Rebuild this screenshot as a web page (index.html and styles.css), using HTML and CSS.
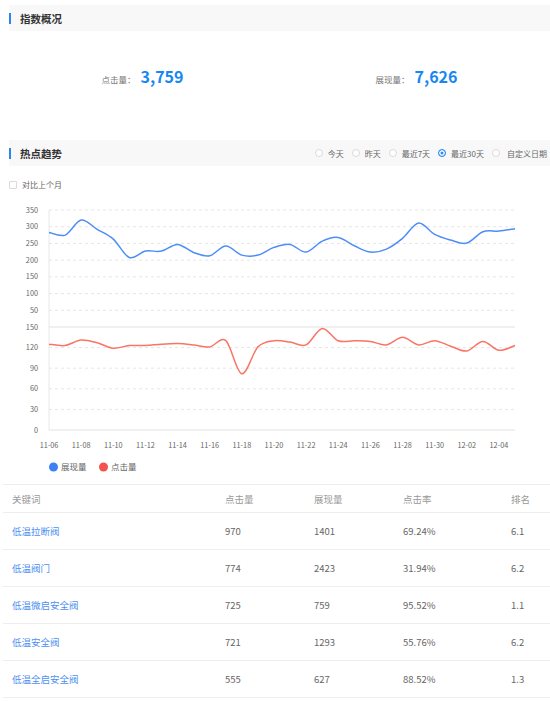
FILE: index.html
```html
<!DOCTYPE html>
<html lang="zh-CN">

<head>
    <meta charset="UTF-8">
    <meta name="viewport" content="width=device-width, initial-scale=1">
    <title>关键词指数</title>
    <link rel="stylesheet" href="styles.css">
</head>

<body>
    <div class="section-head first-head">
        <h3>指数概况</h3>
    </div>

    <div class="stats">
        <div class="stat"><span class="stat-label">点击量：</span><span class="stat-value">3,759</span></div>
        <div class="stat"><span class="stat-label">展现量：</span><span class="stat-value">7,626</span></div>
    </div>

    <div class="section-head">
        <h3>热点趋势</h3>
        <ul class="range">
            <li><span class="radio"></span>今天</li>
            <li><span class="radio"></span>昨天</li>
            <li><span class="radio"></span>最近7天</li>
            <li><span class="radio checked"></span>最近30天</li>
            <li class="custom"><span class="radio"></span>自定义日期</li>
        </ul>
    </div>

    <label class="compare"><span class="checkbox"></span>对比上个月</label>

    <svg id="trend" class="trend" viewBox="0 195 550 285" width="550" height="285"></svg>

    <table class="keywords">
        <colgroup>
            <col style="width: 213px">
            <col style="width: 89px">
            <col style="width: 89px">
            <col style="width: 108px">
            <col>
        </colgroup>
        <thead>
            <tr>
                <th>关键词</th>
                <th>点击量</th>
                <th>展现量</th>
                <th>点击率</th>
                <th>排名</th>
            </tr>
        </thead>
        <tbody>
            <tr>
                <td><a href="#">低温拉断阀</a></td>
                <td>970</td>
                <td>1401</td>
                <td>69.24%</td>
                <td>6.1</td>
            </tr>
            <tr>
                <td><a href="#">低温阀门</a></td>
                <td>774</td>
                <td>2423</td>
                <td>31.94%</td>
                <td>6.2</td>
            </tr>
            <tr>
                <td><a href="#">低温微启安全阀</a></td>
                <td>725</td>
                <td>759</td>
                <td>95.52%</td>
                <td>1.1</td>
            </tr>
            <tr>
                <td><a href="#">低温安全阀</a></td>
                <td>721</td>
                <td>1293</td>
                <td>55.76%</td>
                <td>6.2</td>
            </tr>
            <tr>
                <td><a href="#">低温全启安全阀</a></td>
                <td>555</td>
                <td>627</td>
                <td>88.52%</td>
                <td>1.3</td>
            </tr>
        </tbody>
    </table>

    <script src="chart.js"></script>
</body>

</html>
```

FILE: styles.css
```css
body {
    margin: 0;
    font-family: "Noto Sans CJK SC", "Liberation Sans", sans-serif;
    color: #333;
    background-color: #fff;
    overflow: hidden;
}

.section-head {
    display: flex;
    justify-content: space-between;
    align-items: center;
    height: 26px;
    margin-left: 9px;
    background-color: #f8f8f8;
}

.first-head {
    margin-top: 5px;
}

.section-head h3 {
    display: flex;
    align-items: center;
    margin: 0;
    font-size: 10.5px;
    font-weight: bold;
    color: #333;
}

.section-head h3::before {
    content: "";
    width: 2px;
    height: 11px;
    margin-right: 9px;
    background-color: #2b85f0;
}

.stats {
    display: flex;
    align-items: center;
    height: 90px;
    margin: 0 0 19px 9px;
}

.stat {
    flex: 1;
    display: flex;
    justify-content: center;
    align-items: baseline;
}

.stat + .stat {
    padding-left: 7px;
}

.stat-label {
    margin-right: 5px;
    font-size: 8.5px;
    color: #777;
}

.stat-value {
    font-size: 16px;
    font-weight: bold;
    color: #1787f1;
}

.range {
    list-style: none;
    margin: 0;
    padding: 0 3px 0 0;
    display: flex;
    gap: 8px;
    font-size: 8px;
    color: #666;
}

.range li {
    display: flex;
    align-items: center;
    gap: 5px;
}

.range li.custom {
    gap: 7px;
}

.radio {
    width: 8px;
    height: 8px;
    border: 1px solid #dadada;
    border-radius: 50%;
    box-sizing: border-box;
    background-color: #fff;
}

.radio.checked {
    border-color: #2d8cf0;
    background-color: #2d8cf0;
    box-shadow: inset 0 0 0 1.5px #fff;
}

.compare {
    display: flex;
    align-items: center;
    gap: 5px;
    height: 21px;
    padding: 8px 0 0 9px;
    font-size: 8px;
    color: #666;
}

.checkbox {
    width: 8px;
    height: 8px;
    border: 1px solid #dadada;
    border-radius: 1px;
    box-sizing: border-box;
}

.trend {
    display: block;
}

.trend text {
    font-family: "Noto Sans CJK SC", "Liberation Sans", sans-serif;
    font-size: 7.3px;
    fill: #666;
}

.trend .legend-text {
    font-size: 8.5px;
}

.keywords {
    width: 547px;
    margin: 4px 0 0 3px;
    border-collapse: collapse;
    table-layout: fixed;
    font-size: 9.5px;
}

.keywords th,
.keywords td {
    padding: 0 0 0 9px;
    text-align: left;
    border-top: 1px solid #eee;
    border-bottom: 1px solid #eee;
}

.keywords th {
    height: 27px;
    font-weight: normal;
    color: #999;
}

.keywords td {
    height: 36px;
    color: #666;
}

.keywords td a {
    color: #4d90f0;
    text-decoration: none;
}
```

FILE: chart.js
```js
var views = [283, 275, 320, 292, 263, 208, 227, 227, 247, 223, 213, 242, 215, 215, 238,
    247, 224, 257, 268, 243, 224, 233, 265, 311, 277, 260, 251, 285, 287, 294];
var clicks = [125, 123, 131, 127, 119, 123, 123, 125, 126, 124, 121, 130, 82, 121, 130,
    128, 124, 148, 130, 130, 129, 124, 135, 124, 130, 122, 115, 129, 116, 123];

var svg = document.getElementById('trend');
var NS = 'http://www.w3.org/2000/svg';
var left = 49;
var right = 515;
var step = (right - left) / 29;

function el(tag, attrs, text) {
    var node = document.createElementNS(NS, tag);
    for (var k in attrs) node.setAttribute(k, attrs[k]);
    if (text) node.textContent = text;
    svg.appendChild(node);
    return node;
}

function yView(v) { return 327 - v * 117 / 350; }
function yClick(v) { return 430 - v * 103 / 150; }

// top grid (展现量)
[350, 300, 250, 200, 150, 100, 50].forEach(function (v) {
    var y = yView(v);
    el('line', { x1: left, x2: right, y1: y, y2: y, stroke: '#e6e6e6', 'stroke-dasharray': '3 3' });
    el('text', { x: 38, y: y + 2.5, 'text-anchor': 'end' }, String(v));
});

// bottom grid (点击量)
[120, 90, 60, 30].forEach(function (v) {
    var y = yClick(v);
    el('line', { x1: left, x2: right, y1: y, y2: y, stroke: '#e6e6e6', 'stroke-dasharray': '3 3' });
});
[150, 120, 90, 60, 30, 0].forEach(function (v) {
    el('text', { x: 38, y: yClick(v) + 2.5, 'text-anchor': 'end' }, String(v));
});

el('line', { x1: left, x2: right, y1: 327, y2: 327, stroke: '#e2e2e2' });
el('line', { x1: left, x2: right, y1: 430, y2: 430, stroke: '#e2e2e2' });
el('line', { x1: left, x2: left, y1: 210, y2: 430, stroke: '#e8e8e8' });

// x labels
for (var i = 0; i < 30; i += 2) {
    var day = 6 + i;
    var label = day <= 30 ? '11-' + ('0' + day).slice(-2) : '12-' + ('0' + (day - 30)).slice(-2);
    el('text', { x: left + step * i, y: 447.5, 'text-anchor': 'middle' }, label);
}

function smoothPath(pts) {
    var d = 'M' + pts[0][0] + ',' + pts[0][1];
    for (var i = 0; i < pts.length - 1; i++) {
        var p0 = pts[i - 1] || pts[i];
        var p1 = pts[i];
        var p2 = pts[i + 1];
        var p3 = pts[i + 2] || p2;
        var c1x = p1[0] + (p2[0] - p0[0]) / 6;
        var c1y = p1[1] + (p2[1] - p0[1]) / 6;
        var c2x = p2[0] - (p3[0] - p1[0]) / 6;
        var c2y = p2[1] - (p3[1] - p1[1]) / 6;
        d += ' C' + c1x.toFixed(1) + ',' + c1y.toFixed(1) + ' ' + c2x.toFixed(1) + ',' +
            c2y.toFixed(1) + ' ' + p2[0].toFixed(1) + ',' + p2[1].toFixed(1);
    }
    return d;
}

el('path', {
    d: smoothPath(views.map(function (v, i) { return [left + step * i, yView(v)]; })),
    fill: 'none', stroke: '#4d8df6', 'stroke-width': 1.5
});
el('path', {
    d: smoothPath(clicks.map(function (v, i) { return [left + step * i, yClick(v)]; })),
    fill: 'none', stroke: '#fa7465', 'stroke-width': 1.5
});

// legend
el('circle', { cx: 53.5, cy: 467, r: 4.5, fill: '#3c82f6' });
el('text', { x: 61, y: 470, 'class': 'legend-text' }, '展现量');
el('circle', { cx: 103.5, cy: 467, r: 4.5, fill: '#f5524f' });
el('text', { x: 111, y: 470, 'class': 'legend-text' }, '点击量');
```
